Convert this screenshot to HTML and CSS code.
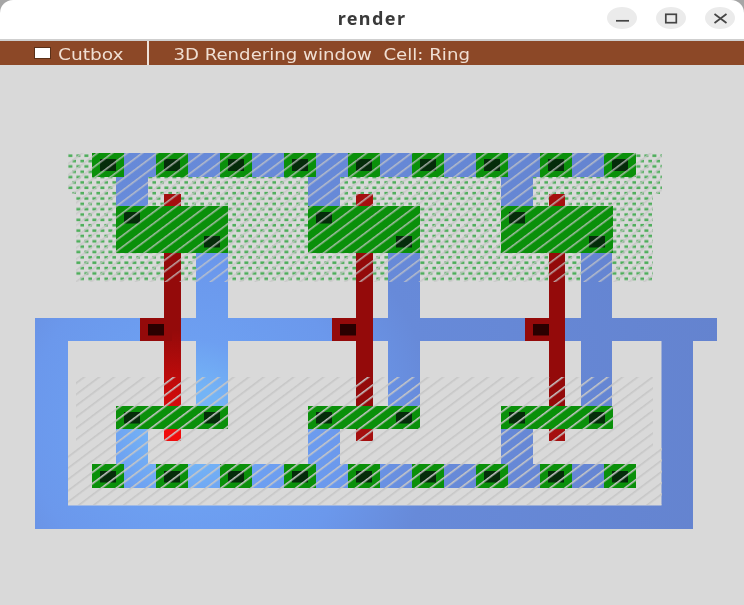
FILE: index.html
```html
<!DOCTYPE html>
<html lang="en">
<head>
<meta charset="utf-8">
<title>render</title>
<link rel="stylesheet" href="styles.css">
</head>
<body>
<div class="window">
  <header class="frame">
    <div class="titlebar">
      <h1 class="title">render</h1>
      <div class="controls">
        <button class="ctl" aria-label="Minimize"><svg width="24" height="24" viewBox="0 0 24 24"><path d="M6 14.800h13" class="gl"/></svg></button>
        <button class="ctl" aria-label="Maximize"><svg width="24" height="24" viewBox="0 0 24 24"><rect x="6.800" y="8.300" width="10.500" height="8.400" class="gl"/></svg></button>
        <button class="ctl" aria-label="Close"><svg width="24" height="24" viewBox="0 0 24 24"><path d="M6.500 8l12 9M18.500 8l-12 9" class="gl"/></svg></button>
      </div>
    </div>
  </header>
  <nav class="menubar">
    <label class="cut"><span class="box"></span><span class="cut-label">Cutbox</span></label>
    <span class="info">3D Rendering window&nbsp; Cell: Ring</span>
  </nav>
  <main class="canvas">
    <svg class="layout" width="744" height="540" viewBox="0 65 744 540">
      <defs>
        <pattern id="dots" width="8" height="10.700" patternUnits="userSpaceOnUse" x="68" y="154">
          <rect x="0.400" y="0.400" width="4" height="2.600" fill="#4fae5c"/>
          <rect x="4.400" y="5.750" width="4" height="2.600" fill="#4fae5c"/>
        </pattern>
        <pattern id="hatch" width="9" height="9" patternUnits="userSpaceOnUse" patternTransform="rotate(-37)">
          <rect width="9" height="1.600" fill="#c6c6c6"/>
        </pattern>
        <radialGradient id="blue" gradientUnits="userSpaceOnUse" cx="190" cy="425" r="540">
          <stop offset="0" stop-color="#74b4f6"/>
          <stop offset="0.070" stop-color="#74b4f6"/>
          <stop offset="0.160" stop-color="#6d9ff1"/>
          <stop offset="0.300" stop-color="#6b98ec"/>
          <stop offset="0.450" stop-color="#678ad9"/>
          <stop offset="1" stop-color="#6483cf"/>
        </radialGradient>
        <radialGradient id="red" gradientUnits="userSpaceOnUse" cx="172" cy="440" r="110">
          <stop offset="0" stop-color="#f20c0c"/>
          <stop offset="1" stop-color="#940a0a"/>
        </radialGradient>
        <g id="cell-top">
          <rect x="116" y="206" width="112" height="47" class="diff"/>
          <rect x="116" y="406" width="112" height="23" class="diff"/>
          <rect x="124" y="212" width="16" height="11.500" class="via"/>
          <rect x="204" y="236" width="16" height="11.500" class="via"/>
          <rect x="124" y="412" width="16" height="11.500" class="via"/>
          <rect x="204" y="412" width="16" height="11.500" class="via"/>
        </g>
      </defs>
      <!-- nwell dots -->
      <path d="M68 153H662V194H653V282H76V194H68Z" fill="url(#dots)"/>
      <!-- metal: ring, rails, straps and drains share one gradient -->
      <path fill="url(#blue)" fill-rule="evenodd" d="M35 318H717V341H693V529H35ZM68 341V505.500H661.500V341Z
        M92 153H636V177H92Z M92 464H636V488H92Z"/>
      <g fill="url(#blue)">
        <rect x="116" y="177" width="32" height="29"/>
        <rect x="308" y="177" width="32" height="29"/>
        <rect x="501" y="177" width="32" height="29"/>
        <rect x="196" y="253" width="32" height="153"/>
        <rect x="388" y="253" width="32" height="153"/>
        <rect x="581" y="253" width="31" height="153"/>
        <rect x="116" y="429" width="32" height="35"/>
        <rect x="308" y="429" width="32" height="35"/>
        <rect x="501" y="429" width="32" height="35"/>
      </g>
      <use href="#cell-top"/>
      <use href="#cell-top" x="192"/>
      <use href="#cell-top" x="385"/>
      <!-- poly -->
      <g class="polys">
        <rect x="164" y="194" width="17" height="12" fill="#a50f0f"/>
        <rect x="356" y="194" width="17" height="12" fill="#a50f0f"/>
        <rect x="549" y="194" width="16" height="12" fill="#a50f0f"/>
        <rect x="164" y="253" width="17" height="153" fill="url(#red)"/>
        <rect x="164" y="429" width="17" height="12" fill="#f00d0d"/>
        <rect x="356" y="253" width="17" height="153" fill="#940a0a"/>
        <rect x="356" y="429" width="17" height="12" fill="#a50f0f"/>
        <rect x="549" y="253" width="16" height="153" fill="#940a0a"/>
        <rect x="549" y="429" width="16" height="12" fill="#a50f0f"/>
        <rect x="140" y="318" width="32" height="23" fill="#940a0a"/>
        <rect x="332" y="318" width="32" height="23" fill="#940a0a"/>
        <rect x="525" y="318" width="32" height="23" fill="#940a0a"/>
        <rect x="148" y="324" width="16" height="11.500" fill="#2a0000"/>
        <rect x="340" y="324" width="16" height="11.500" fill="#2a0000"/>
        <rect x="533" y="324" width="16" height="11.500" fill="#2a0000"/>
      </g>
      <!-- rail contacts -->
      <g class="diff">
        <rect x="92" y="153" width="32" height="24"/><rect x="156" y="153" width="32" height="24"/><rect x="220" y="153" width="32" height="24"/>
        <rect x="284" y="153" width="32" height="24"/><rect x="348" y="153" width="32" height="24"/><rect x="412" y="153" width="32" height="24"/>
        <rect x="476" y="153" width="32" height="24"/><rect x="540" y="153" width="32" height="24"/><rect x="604" y="153" width="32" height="24"/>
        <rect x="92" y="464" width="32" height="24"/><rect x="156" y="464" width="32" height="24"/><rect x="220" y="464" width="32" height="24"/>
        <rect x="284" y="464" width="32" height="24"/><rect x="348" y="464" width="32" height="24"/><rect x="412" y="464" width="32" height="24"/>
        <rect x="476" y="464" width="32" height="24"/><rect x="540" y="464" width="32" height="24"/><rect x="604" y="464" width="32" height="24"/>
      </g>
      <g class="via">
        <rect x="100" y="159" width="16" height="12"/><rect x="164" y="159" width="16" height="12"/><rect x="228" y="159" width="16" height="12"/>
        <rect x="292" y="159" width="16" height="12"/><rect x="356" y="159" width="16" height="12"/><rect x="420" y="159" width="16" height="12"/>
        <rect x="484" y="159" width="16" height="12"/><rect x="548" y="159" width="16" height="12"/><rect x="612" y="159" width="16" height="12"/>
        <rect x="100" y="471" width="16" height="11.500"/><rect x="164" y="471" width="16" height="11.500"/><rect x="228" y="471" width="16" height="11.500"/>
        <rect x="292" y="471" width="16" height="11.500"/><rect x="356" y="471" width="16" height="11.500"/><rect x="420" y="471" width="16" height="11.500"/>
        <rect x="484" y="471" width="16" height="11.500"/><rect x="548" y="471" width="16" height="11.500"/><rect x="612" y="471" width="16" height="11.500"/>
      </g>
      <!-- hatch -->
      <path d="M68 153H662V194H653V282H76V194H68Z" fill="url(#hatch)" opacity="0.800"/>
      <path d="M76 377H653V447H662V505H68V447H76Z" fill="url(#hatch)"/>
    </svg>
  </main>
</div>
</body>
</html>
```
FILE: styles.css
```css
* { box-sizing: border-box; }
html, body { margin: 0; padding: 0; height: 100%; background: #d9d9d9; overflow: hidden; }
.window { display: flex; flex-direction: column; width: 744px; height: 605px; }
.frame { flex: 0 0 41px; background: #a6a6a6; }
.titlebar {
  position: relative;
  height: 41px;
  display: flex;
  align-items: center;
  justify-content: center;
  background: #fff;
  border-bottom: 2px solid #cfcfcf;
  border-radius: 13px 13px 0 0;
}
.title {
  margin: 0;
  font: 700 18px "Noto Sans", "DejaVu Sans", sans-serif;
  color: #3a3a3a;
  letter-spacing: 1.400px;
  transform: translateY(-2px);
  filter: blur(0.3px);
}
.controls { position: absolute; right: 9px; top: 7px; display: flex; gap: 19px; }
.ctl { width: 30px; height: 22px; padding: 0; border: 0; border-radius: 50%; background: #ebebeb; display: flex; align-items: center; justify-content: center; }
.gl { fill: none; stroke: #454545; stroke-width: 1.700; }
.menubar {
  flex: none;
  height: 24px;
  display: flex;
  align-items: stretch;
  background: #8c4827;
  color: #f0dfd3;
  font: 16px "DejaVu Sans", sans-serif;
  line-height: 27px;
}
.cut { width: 149px; height: 24px; padding-left: 35px; display: flex; align-items: center; gap: 8px; border-right: 2px solid #eee2da; }
.box { width: 15px; height: 10px; background: #fff; box-shadow: 0 0 0 1px #5a3018; }
.cut-label { transform: scaleX(1.160) translateY(1px); transform-origin: left center; filter: blur(0.3px); }
.info { padding-left: 21.500px; transform: scaleX(1.134); transform-origin: left center; filter: blur(0.3px); }
.canvas { flex: 1; }
.layout { display: block; filter: blur(0.4px); }
.via { fill: #052c0a; }
.diff { fill: #0a900a; }
```
